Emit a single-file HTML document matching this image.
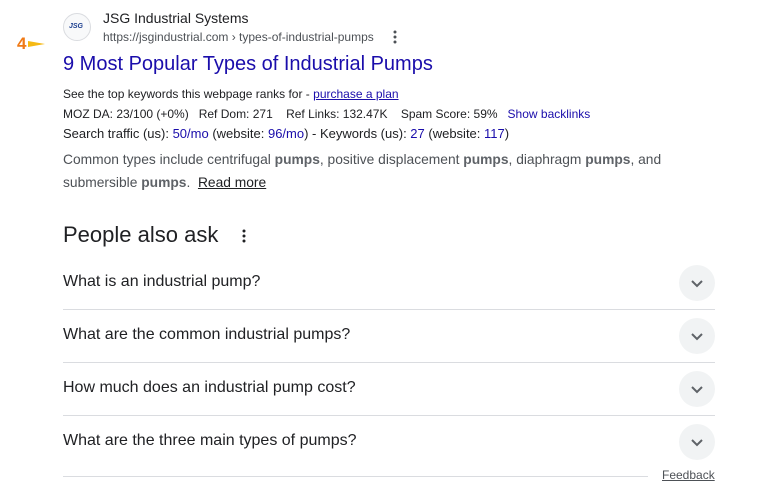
<!DOCTYPE html>
<html><head><meta charset="utf-8"><style>
*{margin:0;padding:0;box-sizing:border-box}
body{width:759px;height:490px;background:#fff;font-family:"Liberation Sans",Arial,sans-serif;position:relative;overflow:hidden;color:#202124}
.a{position:absolute;white-space:nowrap}
.blue{color:#1a0dab}
b{color:#5f6368;font-weight:bold}
.q{position:absolute;left:63px;font-size:16px;color:#202124}
.c{position:absolute;left:679px;width:36px;height:36px;border-radius:50%;background:#f1f3f4}
.c svg{position:absolute;left:11px;top:11px}
.l{position:absolute;left:63px;width:652px;height:1px;background:#dadce0}
</style></head><body>
<div class="a" style="left:17px;top:34px;font-size:17px;font-weight:bold;color:#f07a16">4</div>
<svg class="a" style="left:28px;top:40px" width="18" height="8"><polygon points="0,1 17,4 0,7" fill="#f5b914"/></svg>
<div class="a" style="left:63px;top:13px;width:28px;height:28px;border-radius:50%;border:1px solid #dadce0;background:#f8f9fa"></div>
<div class="a" style="left:69px;top:23px;font-size:7px;font-weight:bold;font-style:italic;color:#1d3f8f">JSG</div>
<div class="a" style="left:103px;top:10px;font-size:14px;color:#202124">JSG Industrial Systems</div>
<div class="a" style="left:103px;top:30px;font-size:12px;color:#4d5156">https://jsgindustrial.com › types-of-industrial-pumps</div>
<svg class="a" style="left:393px;top:30px" width="4" height="14"><circle cx="2" cy="2" r="1.5" fill="#4d5156"/><circle cx="2" cy="7" r="1.5" fill="#4d5156"/><circle cx="2" cy="12" r="1.5" fill="#4d5156"/></svg>
<div class="a blue" style="left:63px;top:53px;font-size:20px">9 Most Popular Types of Industrial Pumps</div>
<div class="a" style="left:63px;top:87px;font-size:12px">See the top keywords this webpage ranks for - <span class="blue" style="text-decoration:underline">purchase a plan</span></div>
<div class="a" style="left:63px;top:107px;font-size:12px">MOZ DA: 23/100 (+0%) &nbsp; Ref Dom: 271 &nbsp;&nbsp; Ref Links: 132.47K &nbsp;&nbsp; Spam Score: 59% &nbsp; <span class="blue">Show backlinks</span></div>
<div class="a" style="left:63px;top:126px;font-size:13px">Search traffic (us): <span class="blue">50/mo</span> (website: <span class="blue">96/mo</span>) - Keywords (us): <span class="blue">27</span> (website: <span class="blue">117</span>)</div>
<div class="a" style="left:63px;top:148px;font-size:13.8px;color:#4d5156;line-height:23px">Common types include centrifugal <b>pumps</b>, positive displacement <b>pumps</b>, diaphragm <b>pumps</b>, and<br>submersible <b>pumps</b>. &nbsp;<span style="color:#202124;text-decoration:underline">Read more</span></div>
<div class="a" style="left:63px;top:222px;font-size:22px">People also ask</div>
<svg class="a" style="left:242px;top:229px" width="4" height="14"><circle cx="2" cy="2" r="1.5" fill="#202124"/><circle cx="2" cy="7" r="1.5" fill="#202124"/><circle cx="2" cy="12" r="1.5" fill="#202124"/></svg>
<div class="q" style="top:273px">What is an industrial pump?</div>
<div class="c" style="top:265px"><svg width="14" height="14"><path d="M2 5l5 5 5-5" stroke="#5f6368" stroke-width="2" fill="none"/></svg></div>
<div class="l" style="top:309px"></div>
<div class="q" style="top:326px">What are the common industrial pumps?</div>
<div class="c" style="top:318px"><svg width="14" height="14"><path d="M2 5l5 5 5-5" stroke="#5f6368" stroke-width="2" fill="none"/></svg></div>
<div class="l" style="top:362px"></div>
<div class="q" style="top:379px">How much does an industrial pump cost?</div>
<div class="c" style="top:371px"><svg width="14" height="14"><path d="M2 5l5 5 5-5" stroke="#5f6368" stroke-width="2" fill="none"/></svg></div>
<div class="l" style="top:415px"></div>
<div class="q" style="top:432px">What are the three main types of pumps?</div>
<div class="c" style="top:424px"><svg width="14" height="14"><path d="M2 5l5 5 5-5" stroke="#5f6368" stroke-width="2" fill="none"/></svg></div>
<div class="l" style="top:476px;width:585px"></div>
<div class="a" style="left:662px;top:468px;font-size:12px;color:#4d5156;text-decoration:underline">Feedback</div>
</body></html>
